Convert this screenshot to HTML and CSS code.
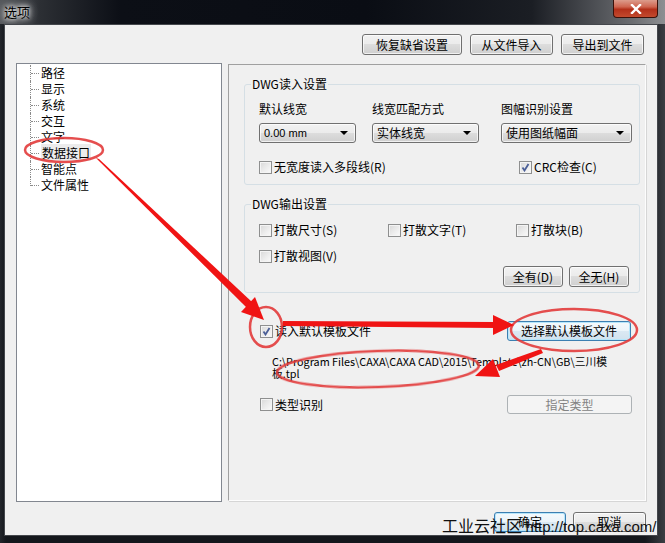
FILE: index.html
```html
<!DOCTYPE html>
<html>

<head>
  <meta charset="utf-8">
  <title>选项</title>
  <link rel="stylesheet" href="styles.css">
</head>

<body>
  <div class="window">
    <div class="titlebar">
      <span class="title">选项</span>
      <span class="close">
        <svg width="12" height="10" viewBox="0 0 12 10">
          <path d="M2 1 L10 9 M10 1 L2 9" stroke="#fff" stroke-width="2.4" stroke-linecap="square" />
        </svg>
      </span>
    </div>

    <div class="client">
      <div class="toolbar">
        <button class="btn w100">恢复缺省设置</button>
        <button class="btn w83">从文件导入</button>
        <button class="btn w83">导出到文件</button>
      </div>

      <div class="main">
        <div class="tree">
          <ul class="tree-list">
            <li>路径</li>
            <li>显示</li>
            <li>系统</li>
            <li>交互</li>
            <li>文字</li>
            <li><span class="sel">数据接口</span></li>
            <li>智能点</li>
            <li>文件属性</li>
          </ul>
        </div>

        <div class="page">
          <fieldset class="group">
            <legend>DWG读入设置</legend>
            <div class="read-grid">
              <div class="lbl">默认线宽</div>
              <div class="lbl">线宽匹配方式</div>
              <div class="lbl">图幅识别设置</div>
              <div class="combo w97"><span class="small">0.00 mm</span><i class="arrow"></i></div>
              <div class="combo w107"><span>实体线宽</span><i class="arrow"></i></div>
              <div class="combo w131"><span>使用图纸幅面</span><i class="arrow"></i></div>
              <label class="check wide"><span class="box"></span>无宽度读入多段线(R)</label>
              <label class="check crc"><span class="box on"><svg width="9" height="9" viewBox="0 0 9 9"><path d="M1.5 4.5 L3.5 7.5 L7.5 1" fill="none" stroke="#4b5f97" stroke-width="1.8" /></svg></span>CRC检查(C)</label>
            </div>
          </fieldset>

          <fieldset class="group out">
            <legend>DWG输出设置</legend>
            <div class="out-grid">
              <label class="check"><span class="box"></span>打散尺寸(S)</label>
              <label class="check"><span class="box"></span>打散文字(T)</label>
              <label class="check"><span class="box"></span>打散块(B)</label>
              <label class="check"><span class="box"></span>打散视图(V)</label>
            </div>
            <div class="out-buttons">
              <button class="btn w60">全有(D)</button>
              <button class="btn w60">全无(H)</button>
            </div>
          </fieldset>

          <div class="tpl-row">
            <label class="check"><span class="box on"><svg width="9" height="9" viewBox="0 0 9 9"><path d="M1.5 4.5 L3.5 7.5 L7.5 1" fill="none" stroke="#4b5f97" stroke-width="1.8" /></svg></span>读入默认模板文件</label>
            <button class="btn default w124">选择默认模板文件</button>
          </div>
          <div class="tpl-path">C:\Program Files\CAXA\CAXA CAD\2015\Template\zh-CN\GB\三川模<br>板.tpl</div>
          <div class="type-row">
            <label class="check"><span class="box"></span>类型识别</label>
            <button class="btn disabled w125">指定类型</button>
          </div>
        </div>
      </div>

      <div class="footer">
        <button class="btn default w72">确定</button>
        <button class="btn w73">取消</button>
      </div>
    </div>

    <!-- red markings drawn over the dialog -->
    <svg class="marks" width="665" height="543" viewBox="0 0 665 543">
      <g fill="none" stroke="#e23a3a" stroke-width="2.5" opacity="0.9">
        <ellipse cx="64" cy="150" rx="39" ry="12" />
        <ellipse cx="266" cy="327" rx="16" ry="20" />
        <ellipse cx="574" cy="330" rx="63" ry="21" />
        <ellipse cx="378" cy="369" rx="101" ry="18" transform="rotate(-2 378 369)" />
      </g>
      <g fill="#f01414" stroke="none">
        <path d="M96 158 L99 159 L252 302 L247 308 Z" />
        <polygon points="264,320 241,312 255,297" />
        <path d="M283 321 L495 322 L495 328 L283 326 Z" />
        <polygon points="514,325 493,315 493,335" />
        <path d="M541 349 L543 353 L499 371 L496 365 Z" />
        <polygon points="475,376 493,359 500,377" />
      </g>
    </svg>
    <div class="watermark">工业云社区 <span class="url">http://top.caxa.com/</span></div>
  </div>
</body>

</html>
```

FILE: styles.css
```css
* {
  margin: 0;
  padding: 0;
  box-sizing: border-box;
}

body {
  width: 665px;
  height: 543px;
  overflow: hidden;
  font-family: "Noto Sans CJK SC", sans-serif;
  font-size: 12px;
  color: #000;
}

.window {
  position: relative;
  width: 665px;
  height: 543px;
  display: flex;
  flex-direction: column;
  background: linear-gradient(to right, #23262b 0, #14171c 6px, #14171c 97%, #3b3e43 100%);
}

.titlebar {
  height: 24px;
  display: flex;
  justify-content: space-between;
  align-items: flex-start;
  background: linear-gradient(to right, #55585c 0, #2c2f34 40px, #0c0f16 120px, #0a0d14 55%, #1b1e24 80%, #6a6c70 95%, #8d8f92 100%);
}

.title {
  padding: 4px 0 0 4px;
  font-size: 13px;
  line-height: 16px;
  color: #000;
  text-shadow: 0 0 4px #fff, 0 0 8px #fff, 0 0 10px #ddd;
}

.close {
  width: 45px;
  height: 18px;
  margin-right: 7px;
  display: flex;
  align-items: center;
  justify-content: center;
  border: 1px solid #3b110a;
  border-top: none;
  border-radius: 0 0 4px 4px;
  background: linear-gradient(#dc9c8c 0, #cf6550 40%, #b3301a 55%, #c34a2e 100%);
}

.client {
  height: 512px;
  margin: 0 7px 0 4px;
  display: flex;
  flex-direction: column;
  background-color: #f0f0f0;
  border: 1px solid #44474c;
}

/* buttons */

.btn {
  height: 21px;
  border: 1px solid #707070;
  border-radius: 3px;
  background: linear-gradient(#f2f2f2 0, #ebebeb 50%, #dddddd 50%, #cfcfcf 100%);
  box-shadow: inset 0 0 0 1px rgba(255, 255, 255, 0.7);
  font-family: "Noto Sans CJK SC", sans-serif;
  font-size: 12px;
  line-height: 18px;
  color: #000;
  text-align: center;
}

.btn.default {
  border-color: #3c7fb1;
  box-shadow: inset 0 0 0 1px #b6e6fb;
  background: linear-gradient(#f4f9fc 0, #ebf4fa 50%, #dbe9f3 50%, #d1e2ee 100%);
}

.btn.disabled {
  border-color: #adb2b5;
  background: #f4f4f4;
  box-shadow: none;
  color: #838383;
}

.w60 { width: 60px; }
.w72 { width: 72px; }
.w73 { width: 73px; }
.w83 { width: 83px; }
.w100 { width: 100px; }
.w124 { width: 124px; }
.w125 { width: 125px; }

.toolbar {
  display: flex;
  justify-content: flex-end;
  gap: 8px;
  padding: 9px 13px 0 0;
}

.main {
  display: flex;
  gap: 6px;
  height: 439px;
  margin: 8px 0 0 11px;
}

/* tree */

.tree {
  width: 206px;
  height: 439px;
  padding: 1px 0 0 13px;
  background-color: #fff;
  border: 1px solid #828790;
}

.tree-list li {
  position: relative;
  list-style: none;
  height: 16px;
  line-height: 16px;
  padding-left: 11px;
}

.tree-list li::before {
  content: "";
  position: absolute;
  left: 1px;
  top: 8px;
  width: 8px;
  border-top: 1px dotted #8a8a8a;
}

.tree-list li::after {
  content: "";
  position: absolute;
  left: 0;
  top: 0;
  height: 16px;
  border-left: 1px dotted #8a8a8a;
}

.tree-list li:last-child::after {
  height: 9px;
}

.sel {
  background-color: #ececec;
  padding: 0 1px;
}

/* right page */

.page {
  width: 418px;
  height: 437px;
  margin-top: 1px;
  border: 1px solid;
  border-color: #a0a0a0 #fdfdfd #fdfdfd #a0a0a0;
  box-shadow: 1px 1px 0 #d6d6d6;
}

.group {
  margin: 12px 5px 0 15px;
  padding: 0 0 0 6px;
  border: 1px solid #d5dfe5;
  border-radius: 3px;
}

.group legend {
  padding: 0 1px;
  font-size: 12px;
  line-height: 14px;
}

.read-grid {
  display: grid;
  grid-template-columns: 113px 129px 131px;
  padding: 10px 0 9px 8px;
}

.lbl {
  line-height: 16px;
}

.combo {
  height: 20px;
  margin-top: 6px;
  display: flex;
  align-items: center;
  justify-content: space-between;
  padding: 0 7px 0 4px;
  border: 1px solid #707070;
  border-radius: 3px;
  background: linear-gradient(#f2f2f2 0, #ebebeb 50%, #dddddd 50%, #cfcfcf 100%);
  box-shadow: inset 0 0 0 1px rgba(255, 255, 255, 0.7);
  line-height: 16px;
}

.combo .small {
  font-family: "Liberation Sans", sans-serif;
  font-size: 11px;
}

.w97 { width: 97px; }
.w107 { width: 107px; }
.w131 { width: 131px; }

.arrow {
  width: 0;
  height: 0;
  border-left: 4px solid transparent;
  border-right: 4px solid transparent;
  border-top: 4px solid #000;
}

.check {
  display: flex;
  align-items: center;
  gap: 2px;
  height: 16px;
  line-height: 16px;
  white-space: nowrap;
}

.read-grid .check {
  margin-top: 16px;
}

.read-grid .wide {
  grid-column: 1 / 3;
}

.crc {
  margin-left: 18px;
}

.box {
  flex-shrink: 0;
  width: 13px;
  height: 13px;
  display: flex;
  align-items: center;
  justify-content: center;
  border: 1px solid #8e8f8f;
  background: linear-gradient(135deg, #d8d8d8 0, #eeeeee 60%, #fafafa 100%);
  box-shadow: inset 0 0 0 1px #f4f4f4;
}

.out-grid {
  display: grid;
  grid-template-columns: 129px 128px auto;
  row-gap: 10px;
  padding: 11px 0 0 8px;
}

.out-buttons {
  display: flex;
  justify-content: flex-end;
  gap: 6px;
  padding: 2px 10px 5px 0;
}

.out {
  margin-top: 12px;
}

.tpl-row {
  height: 20px;
  margin: 28px 14px 0 31px;
  display: flex;
  align-items: center;
  justify-content: space-between;
}

.tpl-row .btn {
  height: 20px;
}

.tpl-path {
  margin: 14px 0 0 43px;
  font-size: 10.8px;
  line-height: 12px;
}

.type-row {
  height: 19px;
  margin: 16px 13px 0 31px;
  display: flex;
  align-items: center;
  justify-content: space-between;
}

.type-row .btn {
  height: 19px;
  line-height: 16px;
}

.footer {
  display: flex;
  justify-content: flex-end;
  gap: 7px;
  padding: 10px 11px 0 0;
}

.footer .btn {
  height: 20px;
}

/* overlays */

.marks {
  position: absolute;
  left: 0;
  top: 0;
  pointer-events: none;
}

.watermark {
  position: absolute;
  left: 442px;
  top: 516px;
  font-size: 16px;
  line-height: 19px;
  color: #111;
  white-space: nowrap;
}

.url {
  font-family: "Liberation Sans", sans-serif;
  font-size: 15px;
}
```
